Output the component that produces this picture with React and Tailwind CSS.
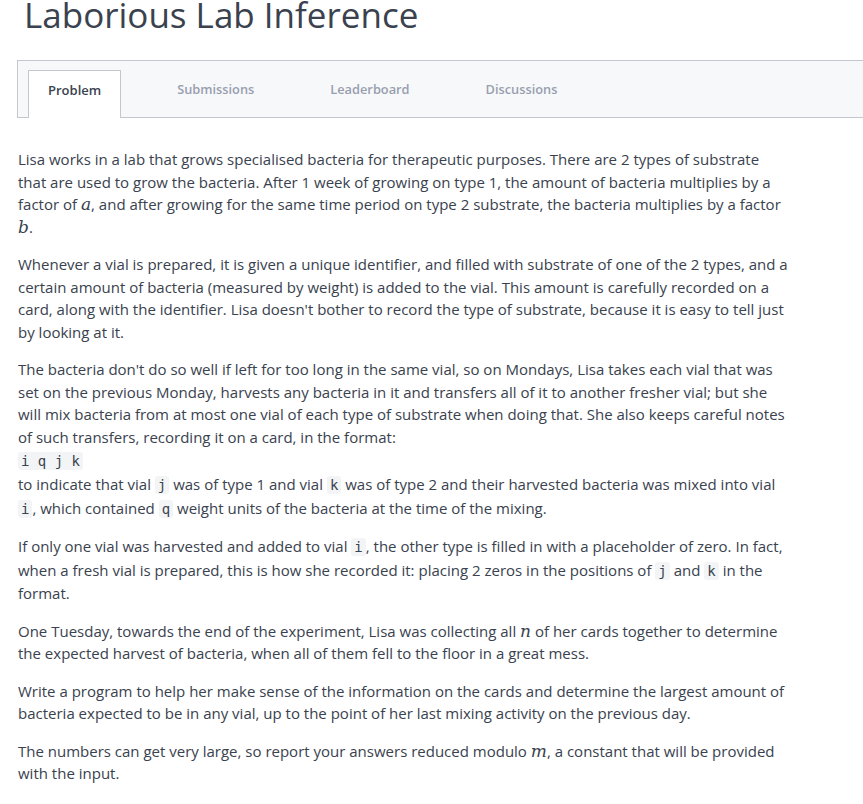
import React from "react";

const C = ({ children }) => (
  <code className="rounded-[3px] bg-[#f3f4f5] px-[3px] py-px font-['DejaVu_Sans_Mono',monospace] text-[14px] text-[#39424e]">
    {children}
  </code>
);

const M = ({ children }) => (
  <span className="font-['DejaVu_Serif',serif] text-[17px] italic leading-none">{children}</span>
);

const tabs = ["Problem", "Submissions", "Leaderboard", "Discussions"];

export default function App() {
  return (
    <div className="min-h-[804px] w-[863px] overflow-hidden bg-white font-['Open_Sans',sans-serif] text-[#39424e]">
      <h1 className="-mt-[3px] pl-[24px] text-[35px] leading-none font-normal whitespace-nowrap">
        Laborious Lab Inference
      </h1>
      <div className="mt-[28px] ml-[17px] flex h-[58px] items-end border-y border-l border-[#c2c7d0] bg-[#f7f8fa] pl-[10px]">
        {tabs.map((t, i) =>
          i === 0 ? (
            <div
              key={t}
              className="-mb-px flex h-[48px] items-start border border-b-0 border-[#c2c7d0] bg-white px-[19px] pt-[9px] text-[13px] leading-[20px] font-semibold text-[#39424e]"
            >
              {t}
            </div>
          ) : (
            <div
              key={t}
              className="ml-[36px] flex h-[47px] items-start px-[20px] pt-[9px] text-[12.8px] leading-[20px] font-semibold text-[#979faf]"
            >
              {t}
            </div>
          )
        )}
      </div>
      <div className="mt-[30px] ml-[18px] flex w-[770px] flex-col gap-[15px] text-[15px] leading-[22.5px]">
        <p>
          Lisa works in a lab that grows specialised bacteria for therapeutic purposes. There are 2 types of substrate
          that are used to grow the bacteria. After 1 week of growing on type 1, the amount of bacteria multiplies by a
          factor of <M>a</M>, and after growing for the same time period on type 2 substrate, the bacteria multiplies by
          a factor <M>b</M>.
        </p>
        <p>
          Whenever a vial is prepared, it is given a unique identifier, and filled with substrate of one of the 2 types,
          and a certain amount of bacteria (measured by weight) is added to the vial. This amount is carefully recorded
          on a card, along with the identifier. Lisa doesn't bother to record the type of substrate, because it is easy
          to tell just by looking at it.
        </p>
        <p>
          The bacteria don't do so well if left for too long in the same vial, so on Mondays, Lisa takes each vial that
          was set on the previous Monday, harvests any bacteria in it and transfers all of it to another fresher vial;
          but she will mix bacteria from at most one vial of each type of substrate when doing that. She also keeps
          careful notes of such transfers, recording it on a card, in the format:
          <br />
          <span className="inline-block leading-[24px]">
            <C>i q j k</C>
          </span>
          <br />
          to indicate that vial <C>j</C> was of type 1 and vial <C>k</C> was of type 2 and their harvested bacteria was
          mixed into vial <C>i</C>, which contained <C>q</C> weight units of the bacteria at the time of the mixing.
        </p>
        <p>
          If only one vial was harvested and added to vial <C>i</C>, the other type is filled in with a placeholder of
          zero. In fact, when a fresh vial is prepared, this is how she recorded it: placing 2 zeros in the positions of{" "}
          <C>j</C> and <C>k</C> in the format.
        </p>
        <p>
          One Tuesday, towards the end of the experiment, Lisa was collecting all <M>n</M> of her cards together to
          determine the expected harvest of bacteria, when all of them fell to the floor in a great mess.
        </p>
        <p>
          Write a program to help her make sense of the information on the cards and determine the largest amount of
          bacteria expected to be in any vial, up to the point of her last mixing activity on the previous day.
        </p>
        <p>
          The numbers can get very large, so report your answers reduced modulo <M>m</M>, a constant that will be
          provided with the input.
        </p>
      </div>
    </div>
  );
}
